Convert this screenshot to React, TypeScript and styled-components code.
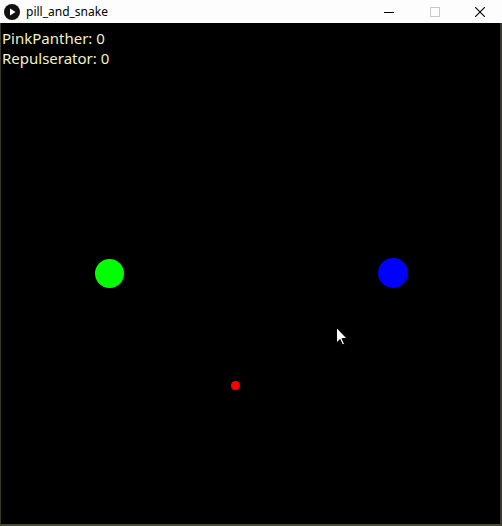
import React from "react";
import styled, { createGlobalStyle } from "styled-components";

const Global = createGlobalStyle`
  html, body { margin: 0; padding: 0; background: #000; }
  body { width: 502px; height: 526px; overflow: hidden; }
`;

const Window = styled.div`
  width: 502px;
  height: 526px;
  display: flex;
  flex-direction: column;
  background: #fff;
  box-sizing: border-box;
  font-family: "Noto Sans", "Open Sans", sans-serif;
`;

const TitleBar = styled.div`
  height: 23px;
  display: flex;
  align-items: center;
  background: #fdfdfd;
  flex-shrink: 0;
`;

const AppIcon = styled.div`
  width: 16px;
  height: 16px;
  margin-left: 4px;
  display: flex;
`;

const Title = styled.span`
  margin-left: 6px;
  font-size: 12px;
  color: #000;
  flex: 1;
  line-height: 1;
`;

const Controls = styled.div`
  display: flex;
  height: 23px;
`;

const ControlBtn = styled.div<{ $w: number }>`
  width: ${(p) => p.$w}px;
  height: 23px;
  display: flex;
  align-items: center;
  justify-content: center;
`;

const Canvas = styled.div`
  position: relative;
  flex: 1;
  background: #000;
  border-left: 1px solid #3a3a28;
  border-right: 2px solid #3a3a28;
  border-bottom: 2px solid #4a4a30;
  overflow: hidden;
`;

const Scores = styled.div`
  padding: 6px 0 0 1px;
  display: flex;
  flex-direction: column;
  gap: 1px;
  color: #f2f0c8;
  font-size: 15px;
  line-height: 19px;
`;

const Ball = styled.div<{ $x: number; $y: number; $r: number; $c: string }>`
  position: absolute;
  left: ${(p) => p.$x - p.$r}px;
  top: ${(p) => p.$y - p.$r}px;
  width: ${(p) => p.$r * 2}px;
  height: ${(p) => p.$r * 2}px;
  border-radius: 50%;
  background: ${(p) => p.$c};
`;

const Cursor = styled.svg`
  position: absolute;
  left: 335px;
  top: 304px;
`;

export default function App() {
  return (
    <>
      <Global />
      <Window>
        <TitleBar>
          <AppIcon>
            <svg width="16" height="16" viewBox="0 0 16 16">
              <circle cx="8" cy="8" r="8" fill="#111" />
              <path d="M6 4.5 L11.5 8 L6 11.5 Z" fill="#fff" />
            </svg>
          </AppIcon>
          <Title>pill_and_snake</Title>
          <Controls>
            <ControlBtn $w={46}>
              <svg width="10" height="10" viewBox="0 0 10 10">
                <path d="M0 5.5 H10" stroke="#000" strokeWidth="1" />
              </svg>
            </ControlBtn>
            <ControlBtn $w={46}>
              <svg width="10" height="10" viewBox="0 0 10 10">
                <rect x="0.5" y="0.5" width="9" height="9" fill="none" stroke="#c8c8c8" strokeWidth="1" />
              </svg>
            </ControlBtn>
            <ControlBtn $w={44}>
              <svg width="10" height="10" viewBox="0 0 10 10">
                <path d="M0 0 L10 10 M10 0 L0 10" stroke="#000" strokeWidth="1.1" />
              </svg>
            </ControlBtn>
          </Controls>
        </TitleBar>
        <Canvas>
          <Scores>
            <span>PinkPanther: 0</span>
            <span>Repulserator: 0</span>
          </Scores>
          <Ball $x={108} $y={250} $r={14.5} $c="#00ff00" />
          <Ball $x={392} $y={250} $r={15} $c="#0000ff" />
          <Ball $x={234} $y={362} $r={4.5} $c="#ff0000" />
          <Cursor width="12" height="19" viewBox="0 0 12 19">
            <path d="M0.5 0.5 L0.5 16 L4 12.5 L6.5 18 L8.5 17 L6 11.5 L11 11.5 Z" fill="#fff" stroke="#000" strokeWidth="1" />
          </Cursor>
        </Canvas>
      </Window>
    </>
  );
}
